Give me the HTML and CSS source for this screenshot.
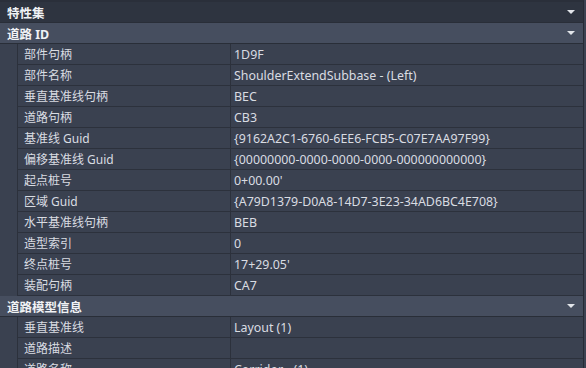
FILE: index.html
```html
<!DOCTYPE html>
<html lang="zh-CN">
<head>
  <meta charset="UTF-8">
  <title>特性集</title>
  <link rel="stylesheet" href="styles.css">
</head>
<body>
  <div class="panel">
    <!-- 标题 -->
    <div class="bar title">
      <span>特性集</span>
      <span class="arrow"></span>
    </div>

    <!-- 道路 ID -->
    <div class="bar section">
      <span>道路 ID</span>
      <span class="arrow"></span>
    </div>
    <div class="group">
      <div class="gutter"></div>
      <div class="rows">
        <div class="row"><div class="label">部件句柄</div><div class="value">1D9F</div></div>
        <div class="row"><div class="label">部件名称</div><div class="value">ShoulderExtendSubbase - (Left)</div></div>
        <div class="row"><div class="label">垂直基准线句柄</div><div class="value">BEC</div></div>
        <div class="row"><div class="label">道路句柄</div><div class="value">CB3</div></div>
        <div class="row"><div class="label">基准线 Guid</div><div class="value">{9162A2C1-6760-6EE6-FCB5-C07E7AA97F99}</div></div>
        <div class="row"><div class="label">偏移基准线 Guid</div><div class="value">{00000000-0000-0000-0000-000000000000}</div></div>
        <div class="row"><div class="label">起点桩号</div><div class="value">0+00.00'</div></div>
        <div class="row"><div class="label">区域 Guid</div><div class="value">{A79D1379-D0A8-14D7-3E23-34AD6BC4E708}</div></div>
        <div class="row"><div class="label">水平基准线句柄</div><div class="value">BEB</div></div>
        <div class="row"><div class="label">造型索引</div><div class="value">0</div></div>
        <div class="row"><div class="label">终点桩号</div><div class="value">17+29.05'</div></div>
        <div class="row"><div class="label">装配句柄</div><div class="value">CA7</div></div>
      </div>
    </div>

    <!-- 道路模型信息 -->
    <div class="bar section">
      <span>道路模型信息</span>
      <span class="arrow"></span>
    </div>
    <div class="group">
      <div class="gutter"></div>
      <div class="rows">
        <div class="row"><div class="label">垂直基准线</div><div class="value">Layout (1)</div></div>
        <div class="row"><div class="label">道路描述</div><div class="value"></div></div>
        <div class="row"><div class="label">道路名称</div><div class="value">Corridor - (1)</div></div>
      </div>
    </div>
  </div>
</body>
</html>
```

FILE: styles.css
```css
body {
  margin: 0;
  background-color: #3c4252;
  font-family: "Noto Sans", "Noto Sans CJK SC", sans-serif;
  font-size: 12px;
  color: #d9dce2;
  overflow: hidden;
}
.panel {
  width: 583px;
  height: 368px;
  border-top: 2px solid #2a2f3a;
  border-right: 1px solid #262b35;
  background-color: #3a4150;
  display: flex;
  flex-direction: column;
  overflow: hidden;
}
.bar {
  flex: 0 0 auto;
  height: 20px;
  display: flex;
  align-items: center;
  justify-content: space-between;
  padding: 0 8px 0 7px;
  border-bottom: 1px solid #292e38;
  font-weight: bold;
  font-size: 12.5px;
  color: #f0f2f5;
}
.title {
  background-color: #2e3440;
}
.section {
  background-color: #464e5f;
}
.arrow {
  width: 0;
  height: 0;
  border-left: 4px solid transparent;
  border-right: 4px solid transparent;
  border-top: 4px solid #e2e5ea;
}
.group {
  flex: 0 0 auto;
  display: flex;
}
.gutter {
  width: 17px;
  border-right: 1px solid #2c313c;
  background-color: #3a4150;
}
.rows {
  flex: 1;
  display: flex;
  flex-direction: column;
}
.row {
  height: 20px;
  display: flex;
  border-bottom: 1px solid #2c313c;
}
.label {
  width: 206px;
  padding-left: 6px;
  border-right: 1px solid #2c313c;
  line-height: 21px;
  white-space: nowrap;
}
.value {
  flex: 1;
  padding-left: 3px;
  font-size: 12.4px;
  line-height: 22px;
  white-space: nowrap;
}
```
